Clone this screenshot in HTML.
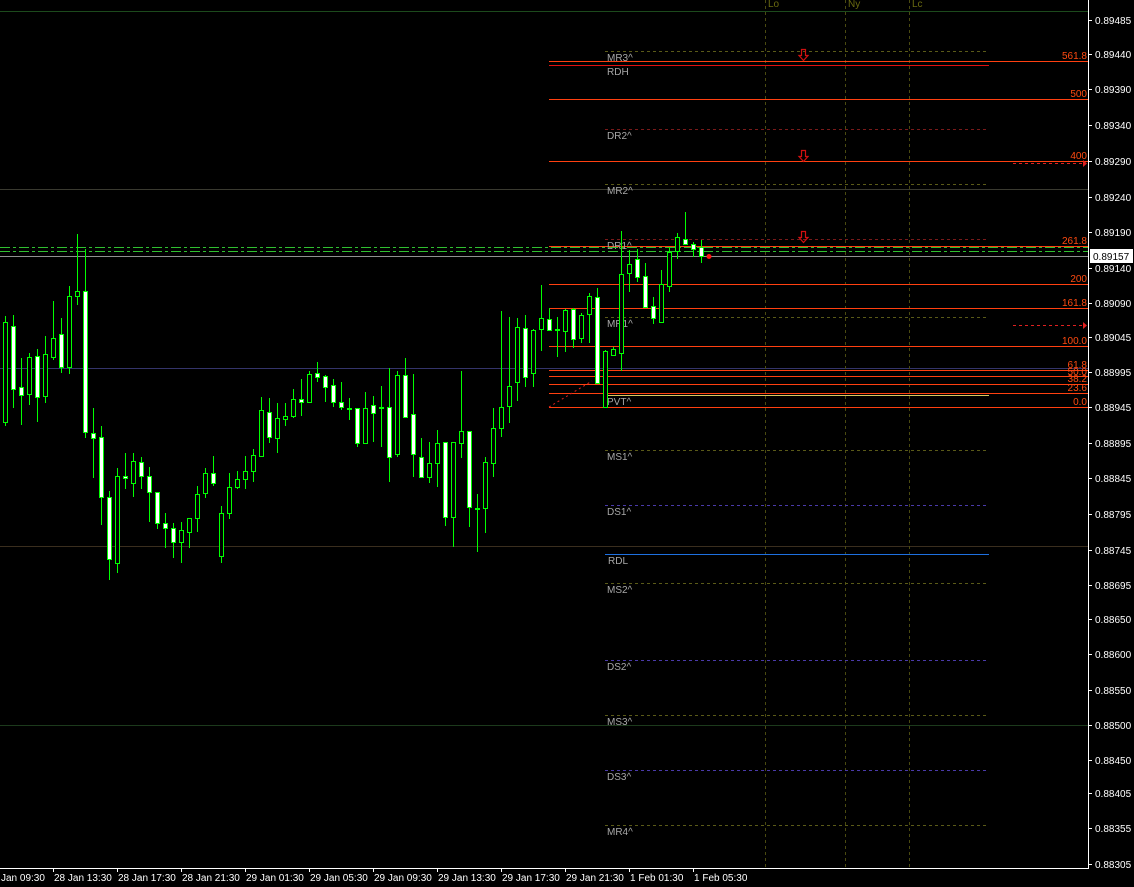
<!DOCTYPE html>
<html><head><meta charset="utf-8">
<style>
html,body{margin:0;padding:0;background:#000;}
svg{display:block;}
text{font-family:"Liberation Sans",sans-serif;}
</style></head>
<body>
<svg id="c" width="1134" height="887" viewBox="0 0 1134 887" xmlns="http://www.w3.org/2000/svg">
<rect width="1134" height="887" fill="#000"/>
<line x1="0" y1="11.5" x2="1088" y2="11.5" stroke="#1c4a1c"/>
<line x1="0" y1="189.5" x2="1088" y2="189.5" stroke="#3a3a30"/>
<line x1="0" y1="368.5" x2="1088" y2="368.5" stroke="#34346a"/>
<line x1="0" y1="546.5" x2="1088" y2="546.5" stroke="#3a2e1e"/>
<line x1="0" y1="725.5" x2="1088" y2="725.5" stroke="#1c3a1c"/>
<g stroke="#4a4a10" stroke-dasharray="3,3">
<line x1="765.5" y1="0" x2="765.5" y2="868"/>
<line x1="845.5" y1="0" x2="845.5" y2="868"/>
<line x1="909.5" y1="0" x2="909.5" y2="868"/>
</g>
<g fill="#6a6a10" font-size="10"><text x="768" y="7">Lo</text><text x="848" y="7">Ny</text><text x="912" y="7">Lc</text></g>
<g stroke-dasharray="3,3" fill="none">
<line x1="605" y1="51.5" x2="986" y2="51.5" stroke="#5a5a18"/>
<line x1="605" y1="129.5" x2="986" y2="129.5" stroke="#7a1a1a"/>
<line x1="605" y1="184.5" x2="986" y2="184.5" stroke="#5a5a18"/>
<line x1="605" y1="239.5" x2="986" y2="239.5" stroke="#7a1a1a"/>
<line x1="605" y1="317.5" x2="986" y2="317.5" stroke="#5a5a18"/>
<line x1="605" y1="450.5" x2="986" y2="450.5" stroke="#5a5a18"/>
<line x1="605" y1="505.5" x2="986" y2="505.5" stroke="#4a3aaa"/>
<line x1="605" y1="583.5" x2="986" y2="583.5" stroke="#5a5a18"/>
<line x1="605" y1="660.5" x2="986" y2="660.5" stroke="#4a3aaa"/>
<line x1="605" y1="715.5" x2="986" y2="715.5" stroke="#5a5a18"/>
<line x1="605" y1="770.5" x2="986" y2="770.5" stroke="#4a3aaa"/>
<line x1="605" y1="825.5" x2="986" y2="825.5" stroke="#5a5a18"/>
</g>
<line x1="549" y1="65.5" x2="989" y2="65.5" stroke="#e01010"/>
<line x1="605" y1="554.5" x2="989" y2="554.5" stroke="#1e70e0"/>
<line x1="607" y1="395.5" x2="989" y2="395.5" stroke="#d8c860"/>
<g stroke="#ff4010">
<line x1="549" y1="61.5" x2="1088" y2="61.5"/>
<line x1="549" y1="99.5" x2="1088" y2="99.5"/>
<line x1="549" y1="161.5" x2="1088" y2="161.5"/>
<line x1="549" y1="246.5" x2="1088" y2="246.5"/>
<line x1="549" y1="284.5" x2="1088" y2="284.5"/>
<line x1="549" y1="308.5" x2="1088" y2="308.5"/>
<line x1="549" y1="346.5" x2="1088" y2="346.5"/>
<line x1="549" y1="370.5" x2="1088" y2="370.5"/>
<line x1="549" y1="376.5" x2="1088" y2="376.5"/>
<line x1="549" y1="384.5" x2="1088" y2="384.5"/>
<line x1="549" y1="393.5" x2="1088" y2="393.5"/>
<line x1="549" y1="407.5" x2="1088" y2="407.5"/>
</g>
<line x1="549" y1="407" x2="592" y2="381" stroke="#e02020" stroke-dasharray="2,3"/>
<g fill="#ff4a10" font-size="10" text-anchor="end">
<text x="1087" y="59">561.8</text><text x="1087" y="97">500</text><text x="1087" y="159">400</text>
<text x="1087" y="244">261.8</text><text x="1087" y="282">200</text><text x="1087" y="306">161.8</text>
<text x="1087" y="344">100.0</text><text x="1087" y="368">61.8</text><text x="1087" y="375">50.0</text>
<text x="1087" y="382">38.2</text><text x="1087" y="391">23.6</text><text x="1087" y="405">0.0</text>
</g>
<g fill="#a8a8a8" font-size="10">
<text x="607" y="61">MR3^</text><text x="607" y="75">RDH</text><text x="607" y="139">DR2^</text>
<text x="607" y="194">MR2^</text><text x="607" y="249">DR1^</text><text x="607" y="327">MR1^</text>
<text x="607" y="405">PVT^</text><text x="607" y="460">MS1^</text><text x="607" y="515">DS1^</text>
<text x="608" y="564">RDL</text><text x="607" y="593">MS2^</text><text x="607" y="670">DS2^</text>
<text x="607" y="725">MS3^</text><text x="607" y="780">DS3^</text><text x="607" y="835">MR4^</text>
</g>
<g fill="none" stroke="#d01010" stroke-width="1.2">
<path d="M801.5 49.5 h4 v6 h2.5 l-4.5 5 l-4.5 -5 h2.5 z"/>
<path d="M801.5 150.5 h4 v6 h2.5 l-4.5 5 l-4.5 -5 h2.5 z"/>
<path d="M801.5 231.5 h4 v6 h2.5 l-4.5 5 l-4.5 -5 h2.5 z"/>
</g>
<g stroke="#e02020" stroke-dasharray="3,3"><line x1="1013" y1="163.5" x2="1083" y2="163.5"/><line x1="1013" y1="325.5" x2="1083" y2="325.5"/></g>
<g fill="#e02020"><path d="M1083 160 L1087 163.5 L1083 167Z"/><path d="M1083 322 L1087 325.5 L1083 329Z"/></g>
<line x1="0" y1="247.5" x2="1088" y2="247.5" stroke="#30c030" stroke-dasharray="10,3,3,3"/>
<line x1="0" y1="251.5" x2="1088" y2="251.5" stroke="#30c030" stroke-dasharray="10,3,3,3"/>
<line x1="0" y1="256.5" x2="1088" y2="256.5" stroke="#909090"/>
<g id="candles"></g>
<circle cx="709" cy="256.5" r="2.5" fill="#ff1010"/>
<line x1="1088.5" y1="0" x2="1088.5" y2="869" stroke="#fff"/>
<line x1="0" y1="868.5" x2="1089" y2="868.5" stroke="#fff"/>
<g id="yax" fill="#fff" font-size="10"></g>
<rect x="1090" y="249" width="43" height="14" fill="#fff"/>
<text x="1093" y="260" font-size="10" fill="#000">0.89157</text>
<g id="xax" fill="#fff" font-size="10"></g>
</svg>
<script>
var NS="http://www.w3.org/2000/svg";
function el(p,t,a,txt){var e=document.createElementNS(NS,t);for(var k in a)e.setAttribute(k,a[k]);if(txt)e.textContent=txt;p.appendChild(e);return e;}
var z=[[258,588,277,575,0],[255,533,287,478,1],[385,585,470,495,1],[370,525,380,493,0],[358,575,377,500,1],[318,520,373,497,0],[213,390,325,380,0],[265,428,313,412,1],[168,432,199,410,0],[12,225,184,199,0],[58,623,184,605,1],[535,745,610,625,1],[588,885,620,800,1],[783,1050,800,988,1],[715,1028,739,998,0],[670,777,739,745,1],[670,800,694,760,0],[682,777,697,737,1],[712,875,737,787,1],[787,898,787,880,1],[850,955,880,895,1],[880,983,895,935,1],[877,1000,901,937,0],[865,955,865,905,0],[768,905,793,865,0],[715,805,730,790,0],[678,768,730,760,1],[828,998,850,978,0],[730,868,772,848,0],[722,777,748,772,0],[678,777,724,748,0],[658,757,676,724,0],[502,677,541,677,0],[505,640,547,622,1],[520,670,565,625,0],[520,587,557,568,0],[478,565,508,557,0],[447,557,508,517,1],[423,515,433,515,0],[396,457,430,442,1],[435,515,438,470,1],[447,530,465,517,1],[457,540,515,532,1],[505,570,535,537,1],[535,650,535,640,1],[487,640,535,640,0],[498,635,525,550,1],[468,650,532,534,1],[413,757,530,680,1],[423,680,435,673,0],[385,560,435,560,1],[433,740,553,673,1],[625,745,682,740,1],[635,760,700,740,0],[600,772,640,700,0],[637,887,637,862,1],[637,950,637,860,0],[423,685,603,640,0],[603,890,603,830,1],[793,965,835,838,1],[682,910,695,835,0],[535,740,595,700,0],[243,620,532,595,0],[262,580,467,527,0],[265,512,292,455,0],[255,470,295,440,1],[297,470,300,430,0],[165,362,265,297,0],[235,300,268,300,1],[262,380,298,300,1]];
var s=[[309,352,310,331,0],[308,348,309,339,1],[313,343,315,338,0],[293,343,296,314,0],[288,383,297,383,1],[350,407,351,407,0],[347,355,349,355,0],[231,371,274,353,0],[250,292,264,273,0],[249,282,259,277,1],[263,308,276,307,1],[297,324,306,318,1],[270,322,284,322,0],[247,292,252,286,0],[233,259,237,251,0],[212,245,239,244,1],[242,257,244,249,1],[240,263,247,256,1]];
var all=z.map(function(c){return [230+c[0]/3,230+c[1]/3,230+c[2]/3,230+c[3]/3,c[4]];}).concat(s);
var g=document.getElementById("candles");
all.forEach(function(c,i){var x=5+8*i;var wt=Math.round(c[0]),wb=Math.round(c[1]),bt=Math.round(c[2]),bb=Math.round(c[3]);if(bb-bt<1)bb=bt+1;
el(g,"line",{x1:x+.5,y1:wt,x2:x+.5,y2:wb,stroke:"#00ff00"});
el(g,"rect",{x:x-1.5,y:bt+.5,width:4,height:bb-bt,fill:c[4]?"#fff":"#000",stroke:"#00ff00"});});
var ya=document.getElementById("yax");
var py=[["0.89485",20],["0.89440",54],["0.89390",89],["0.89340",125],["0.89290",161],["0.89240",197],["0.89190",232],["0.89140",268],["0.89090",303],["0.89045",337],["0.88995",372],["0.88945",407],["0.88895",443],["0.88845",478],["0.88795",514],["0.88745",550],["0.88695",585],["0.88650",619],["0.88600",654],["0.88550",690],["0.88500",725],["0.88450",760],["0.88405",793],["0.88355",828],["0.88305",864]];
py.forEach(function(p){el(ya,"line",{x1:1088,y1:p[1]+.5,x2:1092,y2:p[1]+.5,stroke:"#fff"});el(ya,"text",{x:1095,y:p[1]+4},p[0]);});
var xa=document.getElementById("xax");
var lx=["28 Jan 13:30","28 Jan 17:30","28 Jan 21:30","29 Jan 01:30","29 Jan 05:30","29 Jan 09:30","29 Jan 13:30","29 Jan 17:30","29 Jan 21:30","1 Feb 01:30","1 Feb 05:30"];
el(xa,"text",{x:1,y:881},"Jan 09:30");
lx.forEach(function(t,i){var x=53+64*i;el(xa,"line",{x1:x+.5,y1:868,x2:x+.5,y2:872,stroke:"#fff"});el(xa,"text",{x:x+1,y:881},t);});
</script>
</body></html>
